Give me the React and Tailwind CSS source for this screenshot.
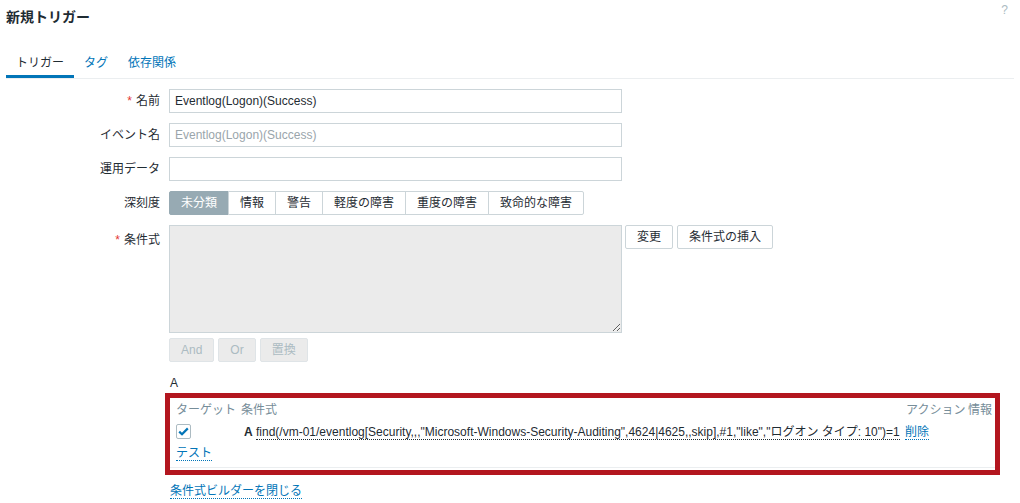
import React from "react";

function Label({ children, req }) {
  return (
    <div className="w-[160px] shrink-0 text-right leading-[24px]">
      {req && <span className="text-[#e33734] mr-[4px]">*</span>}
      {children}
    </div>
  );
}

function Row({ label, req, children, labelCls = "" }) {
  return (
    <div className="flex items-start">
      <div className={labelCls}>
        <Label req={req}>{label}</Label>
      </div>
      <div className="ml-[9px]">{children}</div>
    </div>
  );
}

const sev = ["未分類", "情報", "警告", "軽度の障害", "重度の障害", "致命的な障害"];

export default function App() {
  return (
    <div className="w-[1020px] h-[503px] bg-white relative overflow-hidden text-[12px] text-[#1f2c33] font-['Liberation_Sans','Noto_Sans_CJK_JP',sans-serif]">
      <div className="h-[34px] flex items-center pl-[6px] text-[14px] font-bold text-[#1f2c33]">
        新規トリガー
      </div>
      <div className="absolute right-[12px] top-[1px] text-[12px] text-[#acbbc2]">?</div>

      <div className="mt-[10px] mx-[6px] flex border-b border-[#ebeef0]">
        <div className="h-[34px] pt-[12px] px-[10px] leading-[14px] border-b-[3px] border-[#0275b8] text-[#1f2c33]">
          トリガー
        </div>
        <div className="h-[34px] pt-[12px] px-[10px] leading-[14px] border-b-[3px] border-transparent text-[#0275b8]">
          タグ
        </div>
        <div className="h-[34px] pt-[12px] px-[10px] leading-[14px] border-b-[3px] border-transparent text-[#0275b8]">
          依存関係
        </div>
      </div>

      <div className="mt-[10px] flex flex-col gap-[10px]">
        <Row label="名前" req>
          <div className="w-[453px] h-[24px] border border-[#ccd5d9] px-[5px] leading-[22px] text-[#1f2c33]">
            Eventlog(Logon)(Success)
          </div>
        </Row>
        <Row label="イベント名">
          <div className="w-[453px] h-[24px] border border-[#ccd5d9] px-[5px] leading-[22px] text-[#9aa5ab]">
            Eventlog(Logon)(Success)
          </div>
        </Row>
        <Row label="運用データ">
          <div className="w-[453px] h-[24px] border border-[#ccd5d9] px-[5px] leading-[22px]"></div>
        </Row>
        <Row label="深刻度">
          <div className="flex h-[24px]">
            {sev.map((s, i) => (
              <div
                key={s}
                className={
                  i === 0
                    ? "h-[24px] px-[11px] leading-[22px] border border-[#97aab3] bg-[#97aab3] text-white rounded-l-[2px]"
                    : i === sev.length - 1
                    ? "h-[24px] px-[11px] leading-[22px] border border-[#ccd5d9] -ml-px bg-white rounded-r-[2px]"
                    : "h-[24px] px-[11px] leading-[22px] border border-[#ccd5d9] -ml-px bg-white"
                }
              >
                {s}
              </div>
            ))}
          </div>
        </Row>
        <Row label="条件式" req labelCls="pt-[3px]">
          <div className="flex flex-col">
            <div className="flex items-start">
              <textarea
                readOnly
                className="w-[453px] h-[108px] border border-[#ccd5d9] bg-[#ebebeb] outline-none block resize"
              ></textarea>
              <div className="ml-[3px] flex gap-[4px]">
                <div className="h-[24px] px-[11px] leading-[22px] border border-[#ccd5d9] rounded-[2px] bg-white">
                  変更
                </div>
                <div className="h-[24px] px-[11px] leading-[22px] border border-[#ccd5d9] rounded-[2px] bg-white">
                  条件式の挿入
                </div>
              </div>
            </div>
            <div className="mt-[5px] flex gap-[4px]">
              <div className="h-[24px] px-[11px] leading-[22px] border border-[#dfe4e7] rounded-[2px] bg-[#ebebeb] text-[#acbbc2]">
                And
              </div>
              <div className="h-[24px] px-[11px] leading-[22px] border border-[#dfe4e7] rounded-[2px] bg-[#ebebeb] text-[#acbbc2]">
                Or
              </div>
              <div className="h-[24px] px-[11px] leading-[22px] border border-[#dfe4e7] rounded-[2px] bg-[#ebebeb] text-[#acbbc2]">
                置換
              </div>
            </div>

            <div className="mt-[14px] ml-[1px] leading-[14px] h-[14px]">A</div>

            <div className="mt-[3px] -ml-[4px] w-[835px] border-[5px] border-[#b3161f]">
              <div className="w-[825px]">
                <div className="flex h-[23px] items-center text-[#768d99]">
                  <div className="w-[66px] pl-[6px] whitespace-nowrap">ターゲット</div>
                  <div className="flex-1 pl-[5px]">条件式</div>
                  <div className="w-[64px] pl-[6px] whitespace-nowrap">アクション</div>
                  <div className="w-[31px] pl-[4px] whitespace-nowrap">情報</div>
                </div>
                <div className="flex h-[21px] items-center">
                  <div className="w-[66px] pl-[6px]">
                    <div className="w-[15px] h-[15px] border border-[#acbbc2] rounded-[2px] bg-white flex items-center justify-center">
                      <svg width="11" height="9" viewBox="0 0 11 9">
                        <path d="M1.2 4.6 L4 7.2 L9.8 1.4" fill="none" stroke="#0275b8" strokeWidth="2.2" />
                      </svg>
                    </div>
                  </div>
                  <div className="flex-1 pl-[8px] whitespace-nowrap">
                    <span className="font-bold">A</span>{" "}
                    <span className="border-b border-dotted border-[#1f2c33]">
                      find(/vm-01/eventlog[Security,,,"Microsoft-Windows-Security-Auditing",4624|4625,,skip],#1,"like","ログオン タイプ: 10")=1
                    </span>
                  </div>
                  <div className="w-[64px] pl-[5px]">
                    <span className="text-[#0275b8] border-b border-dotted border-[#0275b8]">削除</span>
                  </div>
                  <div className="w-[31px]"></div>
                </div>
                <div className="flex h-[22px] items-center pl-[6px]">
                  <span className="text-[#0275b8] border-b border-dotted border-[#0275b8] leading-[14px]">テスト</span>
                </div>
                <div className="h-[3px]"></div>
                <div className="border-b border-[#ebeef0]"></div>
                <div className="h-[2px]"></div>
              </div>
            </div>

            <div className="mt-[7px] ml-[1px]">
              <span className="text-[#0275b8] border-b border-dotted border-[#0275b8] leading-[14px]">
                条件式ビルダーを閉じる
              </span>
            </div>
          </div>
        </Row>
      </div>
    </div>
  );
}
